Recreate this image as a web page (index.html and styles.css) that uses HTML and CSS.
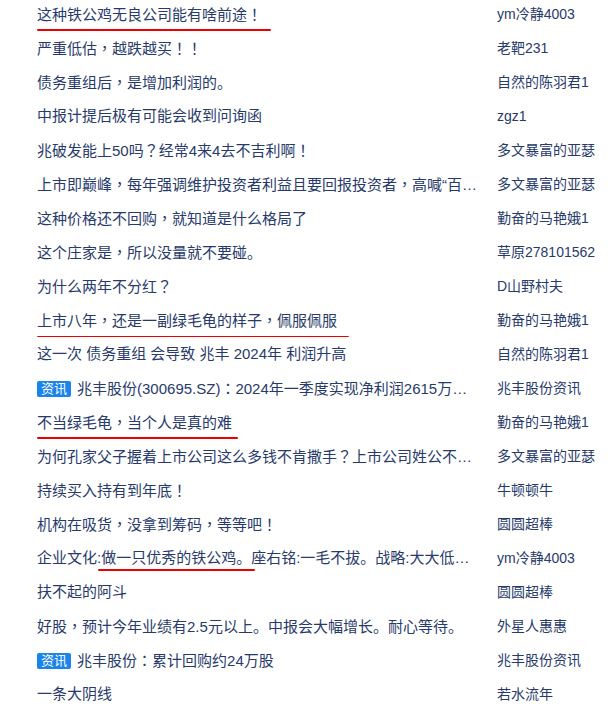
FILE: index.html
```html
<!DOCTYPE html>
<html lang="zh-CN">
<head>
<meta charset="utf-8">
<title>股吧帖子列表</title>
<link rel="stylesheet" href="styles.css">
</head>
<body>
<ul class="list">
  <li class="row"><span class="title"><span class="mark m1">这种铁公鸡无良公司能有啥前途<i class="p" lang="zh-TW">！</i></span></span><span class="author">ym冷静4003</span></li>
  <li class="row"><span class="title">严重低估<i class="p" lang="zh-TW">，</i>越跌越买<i class="p" lang="zh-TW">！！</i></span><span class="author">老靶231</span></li>
  <li class="row"><span class="title">债务重组后<i class="p" lang="zh-TW">，</i>是增加利润的。</span><span class="author">自然的陈羽君1</span></li>
  <li class="row"><span class="title">中报计提后极有可能会收到问询函</span><span class="author">zgz1</span></li>
  <li class="row"><span class="title">兆破发能上50吗<i class="p" lang="zh-TW">？</i>经常4来4去不吉利啊<i class="p" lang="zh-TW">！</i></span><span class="author">多文暴富的亚瑟</span></li>
  <li class="row"><span class="title">上市即巅峰<i class="p" lang="zh-TW">，</i>每年强调维护投资者利益且要回报投资者<i class="p" lang="zh-TW">，</i>高喊“百亿市值”的口号</span><span class="author">多文暴富的亚瑟</span></li>
  <li class="row"><span class="title">这种价格还不回购<i class="p" lang="zh-TW">，</i>就知道是什么格局了</span><span class="author">勤奋的马艳娥1</span></li>
  <li class="row"><span class="title">这个庄家是<i class="p" lang="zh-TW">，</i>所以没量就不要碰。</span><span class="author">草原278101562</span></li>
  <li class="row"><span class="title">为什么两年不分红<i class="p" lang="zh-TW">？</i></span><span class="author">D山野村夫</span></li>
  <li class="row"><span class="title"><span class="mark m10">上市八年<i class="p" lang="zh-TW">，</i>还是一副绿毛龟的样子<i class="p" lang="zh-TW">，</i>佩服佩服</span></span><span class="author">勤奋的马艳娥1</span></li>
  <li class="row"><span class="title">这一次 债务重组 会导致 兆丰 2024年 利润升高</span><span class="author">自然的陈羽君1</span></li>
  <li class="row"><span class="title"><span class="badge">资讯</span>兆丰股份(300695.SZ)<i class="p" lang="zh-TW">：</i>2024年一季度实现净利润2615万元，同比增长</span><span class="author">兆丰股份资讯</span></li>
  <li class="row"><span class="title"><span class="mark m13">不当绿毛龟<i class="p" lang="zh-TW">，</i>当个人是真的难</span></span><span class="author">勤奋的马艳娥1</span></li>
  <li class="row"><span class="title">为何孔家父子握着上市公司这么多钱不肯撒手<i class="p" lang="zh-TW">？</i>上市公司姓公不姓孔</span><span class="author">多文暴富的亚瑟</span></li>
  <li class="row"><span class="title">持续买入持有到年底<i class="p" lang="zh-TW">！</i></span><span class="author">牛顿顿牛</span></li>
  <li class="row"><span class="title">机构在吸货<i class="p" lang="zh-TW">，</i>没拿到筹码<i class="p" lang="zh-TW">，</i>等等吧<i class="p" lang="zh-TW">！</i></span><span class="author">圆圆超棒</span></li>
  <li class="row"><span class="title">企业文化:<span class="mark m17">做一只优秀的铁公鸡。</span>座右铭:一毛不拔。战略:大大低调，闷声发财</span><span class="author">ym冷静4003</span></li>
  <li class="row"><span class="title">扶不起的阿斗</span><span class="author">圆圆超棒</span></li>
  <li class="row"><span class="title">好股<i class="p" lang="zh-TW">，</i>预计今年业绩有2.5元以上。中报会大幅增长。耐心等待。</span><span class="author">外星人惠惠</span></li>
  <li class="row"><span class="title"><span class="badge">资讯</span>兆丰股份<i class="p" lang="zh-TW">：</i>累计回购约24万股</span><span class="author">兆丰股份资讯</span></li>
  <li class="row"><span class="title">一条大阴线</span><span class="author">若水流年</span></li>
</ul>
</body>
</html>
```
FILE: styles.css
```css
html, body {
  margin: 0;
  padding: 0;
  background: #ffffff;
}

body {
  font-family: "Liberation Sans", "Noto Sans CJK SC", sans-serif;
  color: #283a6c;
}

.list {
  list-style: none;
  margin: -3px 0 0 0;
  padding: 0 0 0 37px;
}

.row {
  display: grid;
  grid-template-columns: 442px 1fr;
  column-gap: 18px;
  height: 34px;
  line-height: 34px;
}

.title {
  font-size: 15px;
  white-space: nowrap;
  overflow: hidden;
  text-overflow: ellipsis;
}

.author {
  font-size: 14px;
  white-space: nowrap;
  overflow: hidden;
}

.p {
  font-style: normal;
  font-family: "Noto Sans CJK TC", sans-serif;
}

.badge {
  display: inline-block;
  height: 16px;
  line-height: 16px;
  padding: 0 4px;
  margin-right: 6px;
  border-radius: 2px;
  background: #1a84ea;
  color: #ffffff;
  font-size: 13px;
  vertical-align: middle;
  position: relative;
  top: -1px;
}

.mark {
  position: relative;
}

.mark::after {
  content: "";
  position: absolute;
  left: 0;
  height: 2px;
  background: #ee0000;
  border-radius: 1px;
}

.m1::after { right: -9px; top: 23px; }
.m10::after { right: -12px; top: 24px; }
.m13::after { right: -6px; top: 23px; }
.m17::after { left: -3px; right: -4px; top: 20px; }
```
